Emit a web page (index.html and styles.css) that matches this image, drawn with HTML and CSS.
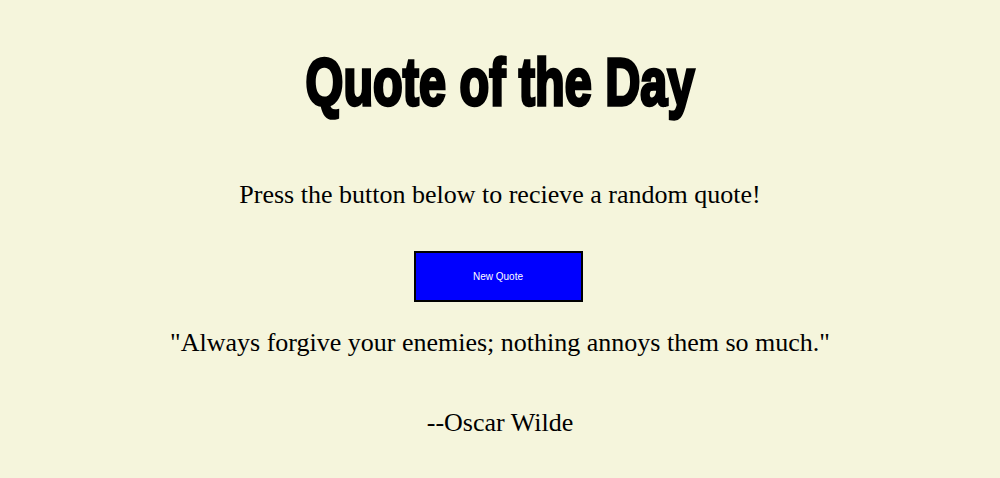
FILE: index.html
```html
<!DOCTYPE html>
<html lang="en">
<head>
<meta charset="utf-8">
<title>Quote of the Day</title>
<link rel="stylesheet" href="styles.css">
</head>
<body>
<main class="page">
  <h1 class="title">Quote of the Day</h1>
  <p class="intro">Press the button below to recieve a random quote!</p>
  <button class="new-quote" type="button">New Quote</button>
  <p class="quote">"Always forgive your enemies; nothing annoys them so much."</p>
  <p class="author">--Oscar Wilde</p>
</main>
</body>
</html>
```

FILE: styles.css
```css
html, body {
  margin: 0;
  padding: 0;
  background: #f5f5dc;
}

.page {
  display: flex;
  flex-direction: column;
  align-items: center;
  font-family: "Liberation Serif", "Times New Roman", serif;
  color: #000;
  text-align: center;
}

/* condensed heavy headline */
.title {
  margin: 48px 0 0;
  font-family: Impact, "Liberation Sans Narrow", "Arial Narrow", sans-serif;
  font-weight: 700;
  font-size: 60px;
  line-height: 70px;
  letter-spacing: 0;
  -webkit-text-stroke: 3px #000;
  transform: scale(0.81, 1.12);
}

.intro {
  margin: 62px 0 0;
  font-size: 26px;
  line-height: 30px;
}

.new-quote {
  margin-top: 41px;
  margin-right: 4px;
  width: 169px;
  height: 51px;
  background: #0000ff;
  color: #fff;
  border: 2px solid #000;
  font-family: "Liberation Sans", Arial, sans-serif;
  font-size: 10px;
  cursor: pointer;
}

.quote {
  margin: 26px 0 0;
  font-size: 26px;
  line-height: 30px;
}

.author {
  margin: 50px 0 0;
  font-size: 26px;
  line-height: 30px;
}
```
